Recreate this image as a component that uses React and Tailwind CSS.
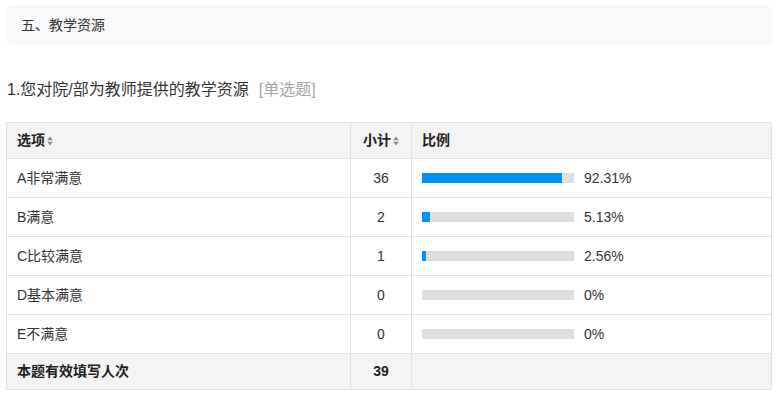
import React from "react";

const rows = [
  { label: "A非常满意", count: 36, pct: 92.31, text: "92.31%" },
  { label: "B满意", count: 2, pct: 5.13, text: "5.13%" },
  { label: "C比较满意", count: 1, pct: 2.56, text: "2.56%" },
  { label: "D基本满意", count: 0, pct: 0, text: "0%" },
  { label: "E不满意", count: 0, pct: 0, text: "0%" },
];

function SortIcon() {
  return (
    <svg width="6" height="10" viewBox="0 0 6 10" className="inline-block ml-[2px] align-[-1px]">
      <path d="M3 0.5 L5.8 4.2 L0.2 4.2 Z" fill="#8c8c8c" />
      <path d="M3 9.5 L5.8 5.8 L0.2 5.8 Z" fill="#8c8c8c" />
    </svg>
  );
}

export default function App() {
  return (
    <div
      className="w-[777px] h-[395px] bg-white px-[6px] pt-[5px] text-[#333]"
      style={{ fontFamily: '"Liberation Sans", "Noto Sans CJK SC", sans-serif' }}
    >
      <div className="h-[40px] w-[766px] rounded-[6px] bg-[#f7f8fa] flex items-center pl-[15px] text-[14px] text-[#333]">
        五、教学资源
      </div>

      <div className="mt-[35px] flex items-center text-[16px] h-[20px] ml-[1px]">
        <span className="text-[#333]">1.您对院/部为教师提供的教学资源</span>
        <span className="ml-[10px] text-[#a6a6a6]">[单选题]</span>
      </div>

      <table className="mt-[22px] w-[766px] border-collapse text-[14px] table-fixed">
        <colgroup>
          <col className="w-[344px]" />
          <col className="w-[61px]" />
          <col />
        </colgroup>
        <thead>
          <tr className="bg-[#f3f3f3] h-[36px]">
            <th className="border border-[#e1e1e1] text-left font-bold pl-[10px] text-[#222]">
              选项
              <SortIcon />
            </th>
            <th className="border border-[#e1e1e1] text-center font-bold text-[#222]">
              小计
              <SortIcon />
            </th>
            <th className="border border-[#e1e1e1] text-left font-bold pl-[10px] text-[#222]">比例</th>
          </tr>
        </thead>
        <tbody>
          {rows.map((r) => (
            <tr key={r.label} className="h-[39px]">
              <td className="border border-[#e1e1e1] pl-[10px]">{r.label}</td>
              <td className="border border-[#e1e1e1] text-center">{r.count}</td>
              <td className="border border-[#e1e1e1] pl-[10px]">
                <div className="flex items-center">
                  <div className="w-[152px] h-[10px] bg-[#dfdfdf]">
                    <div className="h-full bg-[#0091ff]" style={{ width: `${r.pct}%` }} />
                  </div>
                  <span className="ml-[10px]">{r.text}</span>
                </div>
              </td>
            </tr>
          ))}
          <tr className="h-[36px] bg-[#f3f3f3]">
            <td className="border border-[#e1e1e1] pl-[10px] font-bold text-[#222]">本题有效填写人次</td>
            <td className="border border-[#e1e1e1] text-center font-bold text-[#222]">39</td>
            <td className="border border-[#e1e1e1]"></td>
          </tr>
        </tbody>
      </table>
    </div>
  );
}
